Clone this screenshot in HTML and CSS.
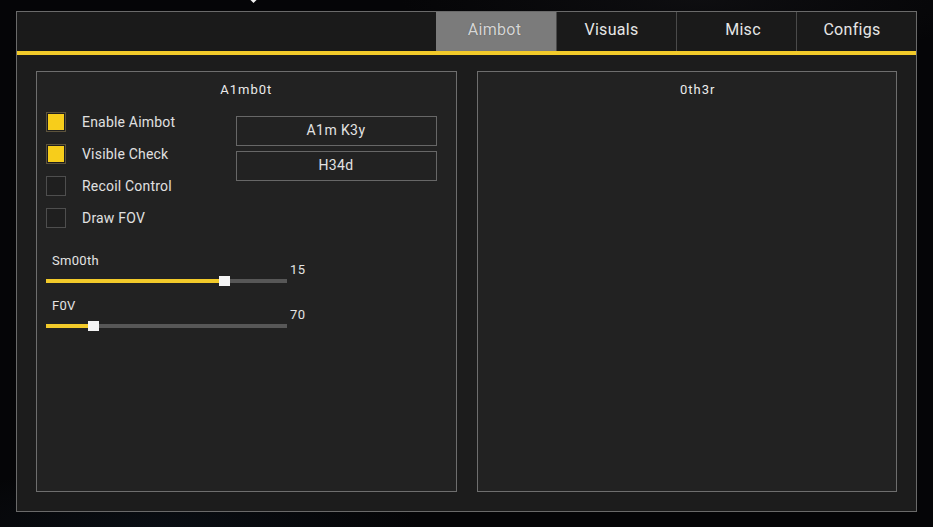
FILE: index.html
```html
<!DOCTYPE html>
<html>
<head>
<meta charset="utf-8">
<link rel="stylesheet" href="styles.css">
</head>
<body>
<span class="marker"></span>
<div class="window">
  <div class="header">
    <div class="tab active">Aimbot</div>
    <div class="tab visuals">Visuals</div>
    <div class="tab misc">Misc</div>
    <div class="tab configs">Configs</div>
  </div>
  <div class="content">
    <section class="panel">
      <div class="panel-title">A1mb0t</div>
      <div class="panel-body">
        <div class="top-row">
          <div class="checks">
            <div class="check"><span class="box on"></span><span class="label">Enable Aimbot</span></div>
            <div class="check"><span class="box on"></span><span class="label">Visible Check</span></div>
            <div class="check"><span class="box"></span><span class="label">Recoil Control</span></div>
            <div class="check"><span class="box"></span><span class="label">Draw FOV</span></div>
          </div>
          <div class="buttons">
            <div class="btn">A1m K3y</div>
            <div class="btn">H34d</div>
          </div>
        </div>
        <div class="sliders">
          <div class="slider" style="--p:0.75">
            <div class="s-label">Sm00th</div>
            <div class="s-value">15</div>
            <div class="track"><div class="fill"></div><div class="knob"></div></div>
          </div>
          <div class="slider" style="--p:0.183">
            <div class="s-label">F0V</div>
            <div class="s-value">70</div>
            <div class="track"><div class="fill"></div><div class="knob"></div></div>
          </div>
        </div>
      </div>
    </section>
    <section class="panel">
      <div class="panel-title other">0th3r</div>
    </section>
  </div>
</div>
</body>
</html>
```

FILE: styles.css
```css
* { box-sizing: border-box; }
html, body { height: 100%; }
body {
  margin: 0;
  padding: 11px 0 0 16px;
  background:
    radial-gradient(ellipse 260px 60px at 160px 527px, rgba(14,22,30,0.55), transparent),
    radial-gradient(ellipse 300px 60px at 700px 0px, rgba(34,34,38,0.3), transparent),
    #050507;
  font-family: Roboto, "Liberation Sans", sans-serif;
  color: #e2e2e2;
  overflow: hidden;
  position: relative;
}
.marker {
  position: absolute;
  left: 251px;
  top: -3px;
  width: 5px;
  height: 5px;
  background: #f2f2f2;
  transform: rotate(45deg);
}
.window {
  width: 901px;
  height: 501px;
  border: 1px solid #6a6a6a;
  background: #1c1c1c;
  display: flex;
  flex-direction: column;
}
.header {
  height: 43px;
  background: #1a1a1a;
  border-bottom: 4px solid #f2ca2a;
  display: flex;
  justify-content: flex-end;
}
.tab {
  width: 120px;
  height: 39px;
  display: flex;
  align-items: center;
  justify-content: center;
  padding-bottom: 4px;
  font-size: 16px;
  font-weight: 400;
  color: #e6e6e6;
  letter-spacing: 0.3px;
  border-left: 1px solid #4a4a4a;
}
.tab.active {
  background: #7b7b7b;
  color: #d6d6d6;
  border-left: none;
  padding-right: 3px;
  text-shadow: 0 0 1px #555;
}
.tab.visuals { padding-right: 10px; }
.tab.misc { padding-left: 13px; }
.tab.configs { padding-right: 9px; }
.content {
  flex: 1;
  display: grid;
  grid-template-columns: 1fr 1fr;
  column-gap: 20px;
  padding: 16px 19px 19px 19px;
}
.panel {
  border: 1px solid #6e6e6e;
  background: #222222;
  display: flex;
  flex-direction: column;
}
.panel-title {
  text-align: center;
  font-size: 13px;
  letter-spacing: 1px;
  line-height: 16px;
  margin-top: 10px;
  color: #ececec;
}
.panel-title.other { padding-left: 22px; }
.panel-body {
  padding: 14px 19px 0 9px;
}
.top-row {
  display: flex;
  justify-content: space-between;
}
.checks {
  display: flex;
  flex-direction: column;
  gap: 12px;
}
.check {
  display: flex;
  align-items: center;
  gap: 16px;
  height: 20px;
}
.box {
  width: 20px;
  height: 20px;
  border: 1px solid #4e4e4e;
  background: #1f1f1f;
  padding: 1px;
}
.box.on::after {
  content: "";
  display: block;
  width: 100%;
  height: 100%;
  background: #f7cd1b;
}
.box.on { border-color: #5d533c; }
.label {
  font-size: 14px;
  color: #e0e0e0;
  letter-spacing: 0.2px;
}
.buttons {
  display: flex;
  flex-direction: column;
  gap: 5px;
  padding-top: 4px;
}
.btn {
  width: 201px;
  height: 30px;
  border: 1px solid #676767;
  display: flex;
  align-items: center;
  justify-content: center;
  padding-bottom: 3px;
  font-size: 14px;
  color: #e2e2e2;
  letter-spacing: 0.4px;
}
.sliders {
  margin-top: 24px;
  display: flex;
  flex-direction: column;
  gap: 11px;
}
.slider {
  display: grid;
  grid-template-columns: 241px auto;
  grid-template-rows: 16px 10px;
  row-gap: 8px;
  column-gap: 3px;
}
.s-label {
  grid-column: 1;
  grid-row: 1;
  padding-left: 6px;
  padding-top: 1px;
  font-size: 13px;
  line-height: 16px;
  color: #e4e4e4;
  letter-spacing: 0.3px;
}
.s-value {
  grid-column: 2;
  grid-row: 1 / 3;
  align-self: center;
  font-size: 13px;
  line-height: 16px;
  padding-top: 2px;
  color: #e4e4e4;
  letter-spacing: 0.4px;
}
.track {
  grid-column: 1;
  grid-row: 2;
  position: relative;
  height: 10px;
}
.track::before {
  content: "";
  position: absolute;
  left: 0;
  right: 0;
  top: 3px;
  height: 4px;
  background: #575757;
}
.fill {
  position: absolute;
  left: 0;
  top: 3px;
  height: 4px;
  width: calc(var(--p) * (100% - 11px) + 5px);
  background: #f2ca2a;
}
.knob {
  position: absolute;
  top: 0;
  left: calc(var(--p) * (100% - 11px));
  width: 11px;
  height: 10px;
  background: #f4f4f4;
}
```
